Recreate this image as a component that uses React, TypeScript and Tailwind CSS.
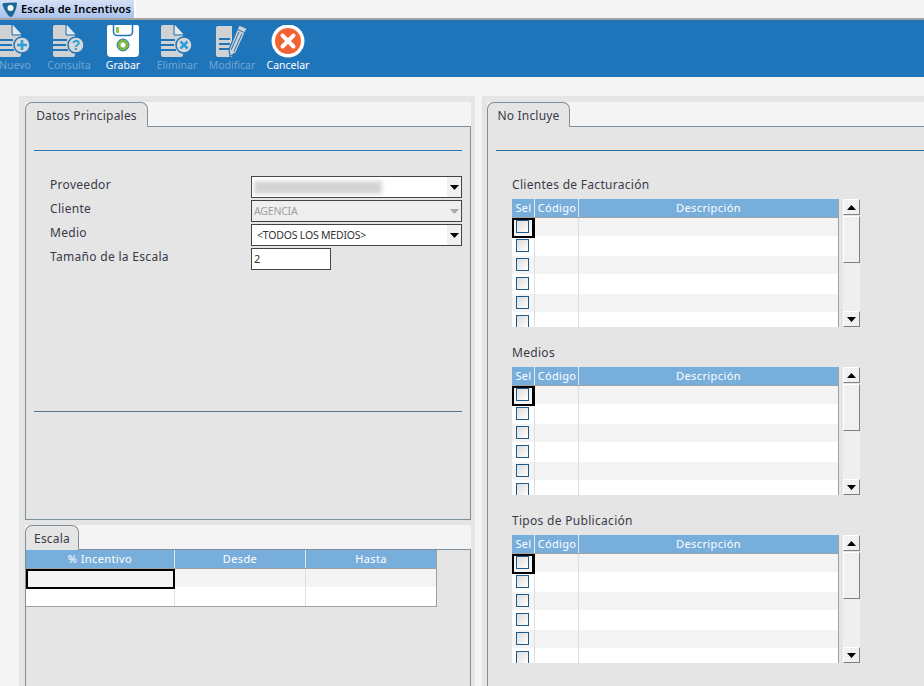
import type { ReactNode } from 'react'

const Doc = ({ children }: { children: ReactNode }) => (
    <svg width="34" height="34" viewBox="0 0 34 34">
        <path d="M1 2a2 2 0 0 1 2-2h11l9 9v21a2 2 0 0 1-2 2H3a2 2 0 0 1-2-2z" fill="#cfd1d2" />
        <path d="M15 0l8 9h-8z" fill="#e6e7e8" />
        <path d="M14 0v10h9" fill="none" stroke="#1f75ba" strokeWidth="1" />
        <g fill="#1f75ba">
            <rect x="1" y="14" width="14" height="2" />
            <rect x="1" y="19" width="13" height="2" />
            <rect x="1" y="24" width="15" height="2" />
        </g>
        <circle cx="24" cy="20" r="8" fill="#d6d8d9" stroke="#1f75ba" strokeWidth="1.5" />
        {children}
    </svg>
)

const NuevoIcon = () => (
    <Doc>
        <path d="M24 15v10M19 20h10" stroke="#2b9fd8" strokeWidth="2.6" />
    </Doc>
)

const ConsultaIcon = () => (
    <Doc>
        <text x="24" y="25" textAnchor="middle" fontSize="14" fontWeight="700" fontFamily="Liberation Sans, sans-serif" fill="#2b9fd8">?</text>
    </Doc>
)

const EliminarIcon = () => (
    <Doc>
        <path d="M20.5 16.5l7 7M27.5 16.5l-7 7" stroke="#2b9fd8" strokeWidth="2.6" />
    </Doc>
)

const GrabarIcon = () => (
    <svg width="34" height="34" viewBox="0 0 34 34">
        <path d="M3 0h28a2 2 0 0 1 2 2v26a4 4 0 0 1-4 4H5a4 4 0 0 1-4-4V2a2 2 0 0 1 2-2z" fill="#fff" />
        <path d="M7.500 0v7a3.500 3.500 0 0 0 3.500 3.500h12a3.500 3.500 0 0 0 3.500-3.500V0" fill="none" stroke="#1f75ba" strokeWidth="1.500" />
        <rect x="10" y="2" width="3" height="6" rx="1" fill="#8cc63f" />
        <circle cx="17" cy="20" r="6" fill="#7ab648" stroke="#2a7db8" strokeWidth="1" />
        <circle cx="17" cy="20" r="2.500" fill="#fff" />
    </svg>
)

const ModificarIcon = () => (
    <svg width="34" height="34" viewBox="0 0 34 34">
        <path d="M1 3a2 2 0 0 1 2-2h14v31H3a2 2 0 0 1-2-2z" fill="#cfd1d2" />
        <g fill="#1f75ba">
            <rect x="4" y="13" width="11" height="2" />
            <rect x="4" y="18" width="11" height="2" />
            <rect x="4" y="23" width="11" height="2" />
        </g>
        <path d="M24 0l8 3.500-11 24-6 4-1-7z" fill="#cfd1d2" stroke="#1f75ba" strokeWidth="1.200" />
        <path d="M22.500 4.500l8 3.500M24 7l-8 18M27 8.500l-8 18" stroke="#1f75ba" strokeWidth="1" />
    </svg>
)

const CancelarIcon = () => (
    <svg width="34" height="34" viewBox="0 0 34 34">
        <circle cx="17" cy="16" r="16.500" fill="#fff" />
        <circle cx="17" cy="16" r="13" fill="#f26334" />
        <path d="M11.500 10.500l11 11M22.500 10.500l-11 11" stroke="#fff" strokeWidth="4" strokeLinecap="round" />
    </svg>
)

const tools = [
    { label: 'Nuevo', icon: <NuevoIcon />, on: false, w: 'w-[54px]' },
    { label: 'Consulta', icon: <ConsultaIcon />, on: false, w: 'w-[54px]' },
    { label: 'Grabar', icon: <GrabarIcon />, on: true, w: 'w-[54px]' },
    { label: 'Eliminar', icon: <EliminarIcon />, on: false, w: 'w-[54px]' },
    { label: 'Modificar', icon: <ModificarIcon />, on: false, w: 'w-[56px]' },
    { label: 'Cancelar', icon: <CancelarIcon />, on: true, w: 'w-[56px]' },
]

const Tab = ({ label, w }: { label: string; w: string }) => (
    <div className={`${w} h-[25px] -mb-px pt-[1px] bg-[#e5e5e5] border border-b-0 border-[#7f8f99] rounded-t-[7px] flex items-center justify-center text-[12px] tracking-[0.2px] text-[#3a3a48]`}>
        {label}
    </div>
)

const Arrow = ({ dir }: { dir: 'up' | 'down' }) => (
    <svg width="9" height="5" viewBox="0 0 9 5">
        <path d={dir === 'up' ? 'M0 5h9L4.500 0z' : 'M0 0h9L4.500 5z'} fill="#000" />
    </svg>
)

const Select = ({ value, disabled }: { value?: string; disabled?: boolean }) => (
    <div className={`w-[211px] h-[22px] border border-[#444] flex items-center justify-between ${disabled ? 'bg-[#efefef]' : 'bg-white'}`}>
        {value ? (
            <span className={`pt-[1px] text-[10.5px] tracking-[-0.2px] ${disabled ? 'pl-[2px] text-[#a0a0a0]' : 'pl-[5px] text-[#333]'}`}>{value}</span>
        ) : (
            <span className="ml-[2px] w-[128px] h-[13px] bg-[#d4d4d4] blur-[2px]" />
        )}
        <span className={`w-[14px] h-full flex items-center justify-center ${disabled ? '' : 'bg-[#f0f0f0]'}`}>
            <svg width="9" height="5" viewBox="0 0 9 5">
                <path d="M0 0h9L4.500 5z" fill={disabled ? '#a8a8a8' : '#000'} />
            </svg>
        </span>
    </div>
)

const FormRow = ({ label, children }: { label: string; children: ReactNode }) => (
    <div className="flex items-center h-[22px]">
        <span className="w-[217px] pl-[16px] text-[12px] tracking-[0.3px] text-[#3a3a48] pb-[5px]">{label}</span>
        {children}
    </div>
)

const ScrollBtn = ({ children, h }: { children?: ReactNode; h: string }) => (
    <div className={`${h} shrink-0 bg-[#f0f0f0] border-t border-l border-white border-r border-b border-r-[#808080] border-b-[#808080] flex items-center justify-center`}>{children}</div>
)

const Scrollbar = () => (
    <div className="w-[17px] h-full flex flex-col">
        <ScrollBtn h="h-[16px]"><Arrow dir="up" /></ScrollBtn>
        <div className="h-[1px] shrink-0" />
        <ScrollBtn h="h-[47px]" />
        <div className="flex-1 bg-[repeating-conic-gradient(#f6f6f6_0_25%,#e8e8e8_0_50%)] bg-[length:2px_2px]" />
        <ScrollBtn h="h-[16px]"><Arrow dir="down" /></ScrollBtn>
    </div>
)

const Check = () => (
    <span className="w-[13px] h-[13px] shrink-0 border border-[#1d5a8c] bg-gradient-to-br from-[#dcdcdc] to-white" />
)

const rows = [
    'h-[18px] bg-[#f4f4f4]',
    'h-[20px] bg-white',
    'h-[18px] bg-[#f4f4f4]',
    'h-[20px] bg-white',
    'h-[18px] bg-[#f4f4f4]',
    'h-[20px] bg-white',
]

const PickGrid = ({ title }: { title: string }) => (
    <div>
        <div className="h-[15px] mb-[7px] flex items-center text-[12px] tracking-[0.3px] text-[#3a3a48]">{title}</div>
        <div className="flex gap-[4px] h-[128px]">
            <div className="w-[327px] h-full overflow-hidden border-r border-[#a0a0a0]">
                <div className="flex h-[19px] bg-[#78aedb] border-b border-[#a0a0a0] text-white text-[11px] tracking-[0.3px]">
                    <div className="w-[23px] pt-[1px] pl-[1px] flex items-center justify-center border-r border-[#e8e8e8]">Sel</div>
                    <div className="w-[44px] pt-[1px] pl-[1px] flex items-center justify-center border-r border-[#e8e8e8]">Código</div>
                    <div className="flex-1 pt-[1px] flex items-center justify-center tracking-[0.4px]">Descripción</div>
                </div>
                {rows.map((r, i) => (
                    <div key={i} className={`flex ${r}`}>
                        {i === 0 ? (
                            <div className="w-[23px] h-[20px] shrink-0 flex items-start pl-[2px] border-2 border-r-[3px] border-black z-10">
                                <Check />
                            </div>
                        ) : (
                            <div className={`w-[23px] shrink-0 flex items-start pl-[4px] border-r border-[#dedede] ${i % 2 ? 'pt-[3px]' : 'pt-[2px]'}`}>
                                <Check />
                            </div>
                        )}
                        <div className="w-[44px] border-r border-[#dedede]" />
                        <div className="flex-1" />
                    </div>
                ))}
            </div>
            <Scrollbar />
        </div>
    </div>
)

const App = () => (
    <div className="w-[924px] h-[686px] overflow-hidden flex flex-col bg-[#f4f4f4] font-['Noto_Sans',sans-serif]">
        <div className="h-[20px] shrink-0 border-b-2 border-[#a3a3a3] flex">
            <div className="w-[134px] h-[18px] bg-gradient-to-b from-[#d5e0f7] to-[#a9c2ee] flex items-center gap-[2px] text-[11px] font-semibold tracking-[0.1px] text-black">
                <svg width="19" height="18" viewBox="0 0 19 18" className="shrink-0">
                    <path d="M4 3c-1 0-2 1-1.500 2 1 3 4 9 7 11.500 1 .8 2 .5 3-.5 2-2.500 4-8 4.500-12 .1-1-.5-1.500-1.500-1.500z" fill="#1c6a92" />
                    <circle cx="10.500" cy="8" r="3" fill="#fff" />
                </svg>
                Escala de Incentivos
            </div>
            <div className="w-[2px] h-[18px] bg-white" />
        </div>
        <div className="h-[57px] shrink-0 bg-[#1f75ba] flex items-start pt-[5px] -ml-[12px]">
            {tools.map(t => (
                <div key={t.label} className={`${t.w} flex flex-col items-center`}>
                    {t.icon}
                    <span className={`-mt-[1px] text-[10.5px] leading-[14px] ${t.on ? 'text-white' : 'text-[#6fa5d2]'}`}>{t.label}</span>
                </div>
            ))}
        </div>
        <div className="flex-1 flex pt-[19px] pl-[19px] gap-[7px] min-h-0">
            <div className="w-[456px] bg-[#e5e5e5] pt-[6px] px-[6px] flex flex-col">
                <div className="w-[446px] flex border-b border-[#7f8f99] bg-[#f4f4f4] h-[25px]">
                    <Tab label="Datos Principales" w="w-[123px]" />
                </div>
                <div className="w-[446px] h-[393px] border border-t-0 border-[#7f8f99] pt-[23px] px-[8px] shrink-0">
                    <div className="h-px bg-[#2a78b8]" />
                    <div className="pt-[25px] flex flex-col gap-[2px]">
                        <FormRow label="Proveedor"><Select /></FormRow>
                        <FormRow label="Cliente"><Select value="AGENCIA" disabled /></FormRow>
                        <FormRow label="Medio"><Select value="<TODOS LOS MEDIOS>" /></FormRow>
                        <FormRow label="Tamaño de la Escala">
                            <div className="w-[80px] h-[22px] border border-[#444] bg-white flex items-center text-[11px] text-[#333] pl-[2px]">2</div>
                        </FormRow>
                    </div>
                    <div className="h-px bg-[#5a6f7d] mt-[141px]" />
                </div>
                <div className="w-[446px] mt-[5px] flex border-b border-[#7f8f99] bg-[#f4f4f4] h-[25px] shrink-0">
                    <Tab label="Escala" w="w-[54px]" />
                </div>
                <div className="w-[446px] flex-1 border-x border-[#7f8f99]">
                    <div className="w-[411px] border-r border-b border-[#a0a0a0]">
                        <div className="flex h-[19px] bg-[#78aedb] border-b border-[#a0a0a0] text-white text-[11px] tracking-[0.4px]">
                            <div className="w-[149px] pt-[1px] flex items-center justify-center border-r border-[#e8e8e8]">% Incentivo</div>
                            <div className="w-[131px] pt-[1px] flex items-center justify-center border-r border-[#e8e8e8]">Desde</div>
                            <div className="flex-1 pt-[1px] flex items-center justify-center">Hasta</div>
                        </div>
                        <div className="flex h-[18px] bg-[#f4f4f4]">
                            <div className="w-[149px] h-[20px] border-2 border-black z-10" />
                            <div className="w-[131px] border-r border-[#dedede]" />
                        </div>
                        <div className="flex h-[19px] bg-white">
                            <div className="w-[149px] border-r border-[#dedede]" />
                            <div className="w-[131px] border-r border-[#dedede]" />
                        </div>
                    </div>
                </div>
            </div>
            <div className="flex-1 bg-[#e5e5e5] pt-[6px] pl-[5px] flex flex-col min-w-0">
                <div className="flex border-b border-[#7f8f99] bg-[#f4f4f4] h-[25px]">
                    <Tab label="No Incluye" w="w-[83px]" />
                </div>
                <div className="flex-1 border-l border-[#7f8f99] pt-[23px] pl-[8px]">
                    <div className="h-px bg-[#2a6f9f]" />
                    <div className="pt-[26px] pl-[16px] flex flex-col gap-[18px]">
                        <PickGrid title="Clientes de Facturación" />
                        <PickGrid title="Medios" />
                        <PickGrid title="Tipos de Publicación" />
                    </div>
                </div>
            </div>
        </div>
    </div>
)

export default App
